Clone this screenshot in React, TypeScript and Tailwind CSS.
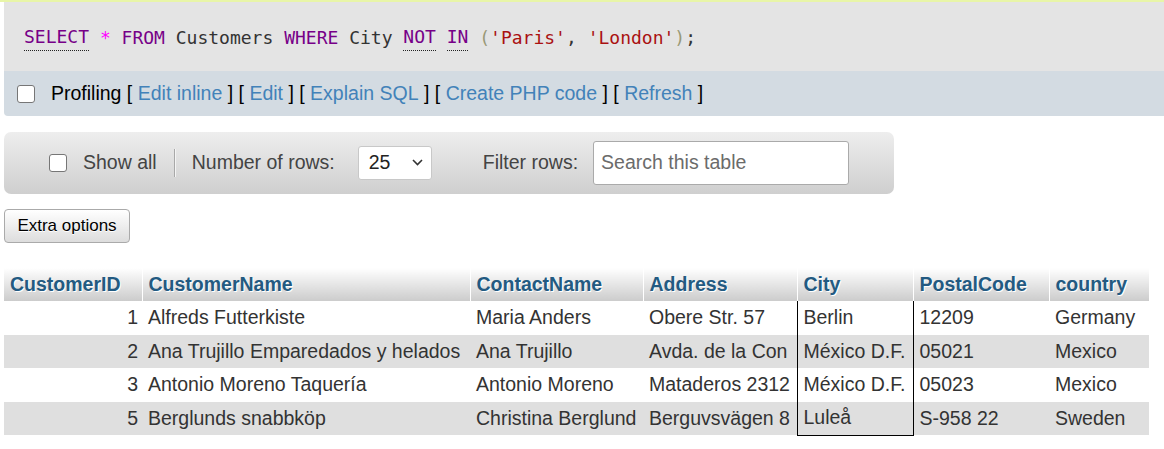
import React from 'react';

type Row = {
  id: number;
  name: string;
  contact: string;
  address: string;
  city: string;
  postal: string;
  country: string;
};

const rows: Row[] = [
  { id: 1, name: 'Alfreds Futterkiste', contact: 'Maria Anders', address: 'Obere Str. 57', city: 'Berlin', postal: '12209', country: 'Germany' },
  { id: 2, name: 'Ana Trujillo Emparedados y helados', contact: 'Ana Trujillo', address: 'Avda. de la Con', city: 'México D.F.', postal: '05021', country: 'Mexico' },
  { id: 3, name: 'Antonio Moreno Taquería', contact: 'Antonio Moreno', address: 'Mataderos 2312', city: 'México D.F.', postal: '05023', country: 'Mexico' },
  { id: 5, name: 'Berglunds snabbköp', contact: 'Christina Berglund', address: 'Berguvsvägen 8', city: 'Luleå', postal: 'S-958 22', country: 'Sweden' },
];

const headers = ['CustomerID', 'CustomerName', 'ContactName', 'Address', 'City', 'PostalCode', 'country'];
const widths = [138, 328, 173, 154, 116, 136, 100];

const Checkbox = () => (
  <span className="inline-block w-[18px] h-[18px] rounded-[3px] border border-[#767676] bg-white" />
);

const Kw = ({ children, dotted = false }: { children: React.ReactNode; dotted?: boolean }) => (
  <span className={`text-[#770088] ${dotted ? 'border-b border-dotted border-[#222]' : ''}`}>{children}</span>
);

const Link = ({ children }: { children: React.ReactNode }) => (
  <>
    <span className="text-black"> [ </span>
    <a href="#" className="text-[#4282b9]">{children}</a>
    <span className="text-black"> ]</span>
  </>
);

export default function App() {
  return (
    <div className="min-h-[449px] bg-white font-['Liberation_Sans',Arial,sans-serif] text-[19.5px] text-[#333]">
      <div className="h-[2px] bg-[#e8f5a8]" />
      <div className="ml-[4px]">
        <div className="h-[69px] bg-[#e4e4e4] pl-[20px] pt-[1px] flex items-center font-['DejaVu_Sans_Mono',monospace] text-[18px] text-[#333] whitespace-pre">
          <Kw dotted>SELECT</Kw>
          <span> </span>
          <span className="text-[#ff00ff]">*</span>
          <span> </span>
          <Kw>FROM</Kw>
          <span> Customers </span>
          <Kw>WHERE</Kw>
          <span> City </span>
          <Kw dotted>NOT</Kw>
          <span> </span>
          <Kw dotted>IN</Kw>
          <span> </span>
          <span className="text-[#999977]">(</span>
          <span className="text-[#aa1111]">'Paris'</span>
          <span>, </span>
          <span className="text-[#aa1111]">'London'</span>
          <span className="text-[#999977]">)</span>
          <span>;</span>
        </div>
        <div className="h-[45px] bg-[#d3dbe2] rounded-bl-[4px] flex items-center pl-[13px] whitespace-pre">
          <Checkbox />
          <span className="ml-[16px] text-black">Profiling</span>
          <Link>Edit inline</Link>
          <Link>Edit</Link>
          <Link>Explain SQL</Link>
          <Link>Create PHP code</Link>
          <Link>Refresh</Link>
        </div>
      </div>

      <div className="mt-[16px] ml-[4px] w-[890px] h-[62px] rounded-[7px] bg-gradient-to-b from-[#eeeeee] to-[#cfcfcf] flex items-center">
        <div className="ml-[45px] flex items-center">
          <Checkbox />
          <span className="ml-[16px] text-[#444]">Show all</span>
        </div>
        <span className="ml-[17px] h-[28px] border-l border-[#a8a8a8] border-r border-r-[#f4f4f4]" />
        <span className="ml-[16px] text-[#444]">Number of rows:</span>
        <div className="ml-[23px] w-[74px] h-[34px] bg-white border border-[#c8c8c8] rounded-[3px] flex items-center justify-between pl-[10px] pr-[8px] text-[#222]">
          <span>25</span>
          <svg width="11" height="7" viewBox="0 0 11 7" className="mb-[1px]">
            <polyline points="1,1 5.5,5.5 10,1" fill="none" stroke="#333" strokeWidth="1.6" />
          </svg>
        </div>
        <span className="ml-[51px] text-[#444]">Filter rows:</span>
        <div className="ml-[15px] w-[256px] h-[44px] bg-white border border-[#aaaaaa] rounded-[3px] flex items-center pl-[7px] text-[#6b6b6b]">
          Search this table
        </div>
      </div>

      <button className="mt-[15px] ml-[4px] w-[126px] h-[34px] rounded-[4px] border border-[#aaaaaa] bg-gradient-to-b from-[#ffffff] to-[#dddddd] text-[17px] text-black [text-shadow:0_1px_0_#fff]">
        Extra options
      </button>

      <table className="mt-[25px] ml-[4px] table-fixed w-[1145px] border-collapse">
        <colgroup>
          {widths.map((w, i) => (
            <col key={i} style={{ width: w }} />
          ))}
        </colgroup>
        <thead>
          <tr className="h-[33px]">
            {headers.map((h, i) => (
              <th
                key={h}
                className={`text-left font-bold text-[#235a81] pl-[6px] pr-[4px] bg-gradient-to-b from-[#ffffff] to-[#cccccc] [text-shadow:1px_1px_0_#fff] ${i < headers.length - 1 ? 'border-r border-white' : ''}`}
              >
                {h}
              </th>
            ))}
          </tr>
        </thead>
        <tbody>
          {rows.map((r, i) => {
            const last = i === rows.length - 1;
            return (
              <tr key={r.id} className={`h-[33.5px] ${i % 2 === 1 ? 'bg-[#dfdfdf]' : 'bg-white'}`}>
                <td className="text-right pl-[6px] pr-[4px] whitespace-nowrap">{r.id}</td>
                <td className="pl-[6px] pr-[4px] whitespace-nowrap overflow-hidden">{r.name}</td>
                <td className="pl-[6px] pr-[4px] whitespace-nowrap overflow-hidden">{r.contact}</td>
                <td className="pl-[6px] pr-[4px] whitespace-nowrap overflow-hidden">{r.address}</td>
                <td className={`pl-[6px] pr-[4px] whitespace-nowrap overflow-hidden border-x border-black ${last ? 'border-b' : ''}`}>{r.city}</td>
                <td className="pl-[6px] pr-[4px] whitespace-nowrap overflow-hidden">{r.postal}</td>
                <td className="pl-[6px] pr-[4px] whitespace-nowrap overflow-hidden">{r.country}</td>
              </tr>
            );
          })}
        </tbody>
      </table>
    </div>
  );
}
